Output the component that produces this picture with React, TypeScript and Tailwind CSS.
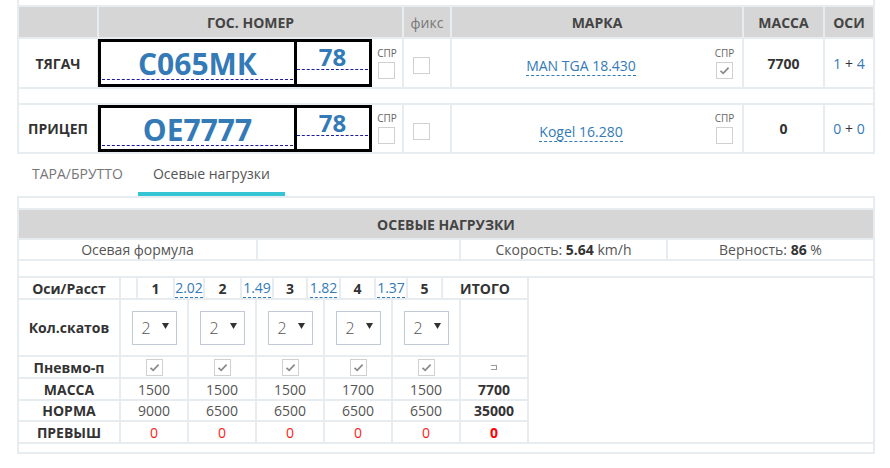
import React from "react";

const linkCls = "text-[#337ab7] border-b border-dashed border-[#337ab7]";

function CheckBox({ checked = false }: { checked?: boolean }) {
    return (
        <div className="w-[17px] h-[17px] border border-[#d0d0d0] bg-white flex items-center justify-center">
            {checked && (
                <svg width="11" height="9" viewBox="0 0 11 9">
                    <path d="M1.5 4.8 L4.2 7.4 L9.6 1.6" stroke="#8a8a8a" strokeWidth="1.7" fill="none" />
                </svg>
            )}
        </div>
    );
}

function Spr({ checked = false }: { checked?: boolean }) {
    return (
        <div className="flex flex-col items-center">
            <span className="text-[10px] leading-[10px] text-[#666]">СПР</span>
            <div className="mt-[4px]">
                <CheckBox checked={checked} />
            </div>
        </div>
    );
}

function Plate({ number, region }: { number: string; region: string }) {
    return (
        <div className="w-[274px] -ml-[1px] border-[3px] border-black flex self-stretch">
            <div className="w-[193px] px-[1px] pt-[5px]">
                <div className="h-[33px] leading-[33px] text-[30px] font-bold text-[#337ab7] text-center border-b border-dashed border-[#1a1a9c]">
                    {number}
                </div>
            </div>
            <div className="w-[3px] bg-black" />
            <div className="w-[72px] pr-[1px] pt-[3px]">
                <div className="h-[25px] leading-[24px] text-[24px] font-bold text-[#337ab7] text-center border-b border-dashed border-[#1a1a9c]">
                    {region}
                </div>
            </div>
        </div>
    );
}

function VehicleRow(props: { label: string; number: string; model: string; modelChecked: boolean; mass: string; axles: [string, string]; h: string }) {
    const { label, number, model, modelChecked, mass, axles, h } = props;
    return (
        <>
            <div className={`${h} bg-white flex items-center justify-center text-[14px] font-bold text-[#333]`}>{label}</div>
            <div className={`${h} bg-white flex`}>
                <Plate number={number} region="78" />
                <div className="w-[30px] flex items-center justify-center">
                    <Spr />
                </div>
            </div>
            <div className={`${h} bg-white pl-[9px] pt-[18px]`}>
                <CheckBox />
            </div>
            <div className={`${h} bg-white flex`}>
                <div className="flex-1 flex justify-center pt-[18px]">
                    <span className={`${linkCls} text-[14px] leading-[18px] h-[19px]`}>{model}</span>
                </div>
                <div className="w-[32px] pr-[3px] flex items-center justify-center">
                    <Spr checked={modelChecked} />
                </div>
            </div>
            <div className={`${h} bg-white flex items-center justify-center text-[14px] font-bold text-[#333]`}>{mass}</div>
            <div className={`${h} bg-white flex items-center justify-center text-[14px] text-[#333]`}>
                <span className="text-[#337ab7]">{axles[0]}</span>&nbsp;+&nbsp;<span className="text-[#337ab7]">{axles[1]}</span>
            </div>
        </>
    );
}

function Select() {
    return (
        <div className="w-[45px] h-[34px] border border-[#c2cad8] flex items-center justify-between pl-[9px] pr-[7px]">
            <span className="text-[16px] font-light text-[#555]">2</span>
            <svg width="7" height="6" viewBox="0 0 7 6" className="-mt-[3px]">
                <path d="M0 0 H7 L3.5 6 Z" fill="#333" />
            </svg>
        </div>
    );
}

const axleHead: Array<{ w: string; text: string; kind: "bold" | "link" | "none" }> = [
    { w: "w-[15px]", text: "", kind: "none" },
    { w: "w-[35px]", text: "1", kind: "bold" },
    { w: "w-[28px]", text: "2.02", kind: "link" },
    { w: "w-[35px]", text: "2", kind: "bold" },
    { w: "w-[30px]", text: "1.49", kind: "link" },
    { w: "w-[32px]", text: "3", kind: "bold" },
    { w: "w-[31px]", text: "1.82", kind: "link" },
    { w: "w-[33px]", text: "4", kind: "bold" },
    { w: "w-[30px]", text: "1.37", kind: "link" },
    { w: "w-[33px]", text: "5", kind: "bold" },
    { w: "w-[84px]", text: "ИТОГО", kind: "bold" },
];

const masses = ["1500", "1500", "1500", "1700", "1500"];
const norms = ["9000", "6500", "6500", "6500", "6500"];

function AxleRow({ label, h, cells, total }: { label: string; h: string; cells: React.ReactNode[]; total: React.ReactNode }) {
    return (
        <div className="flex gap-[2px]">
            <div className={`w-[100px] ${h} bg-white flex items-center justify-center text-[14px] font-bold text-[#333]`}>{label}</div>
            {cells.map((c, i) => (
                <div key={i} className={`w-[66px] ${h} bg-white flex items-center justify-center text-[14px] text-[#555]`}>{c}</div>
            ))}
            <div className={`w-[66px] ${h} bg-white flex items-center justify-center text-[14px] font-bold text-[#333]`}>{total}</div>
        </div>
    );
}

export default function App() {
    return (
        <div className="w-[890px] h-[468px] bg-white font-['Open_Sans',sans-serif] text-[#333] overflow-hidden">
            <div className="ml-[17px] w-[858px]">
                {/* vehicles */}
                <div className="grid grid-cols-[78px_303px_46px_290px_79px_48px] gap-[2px] bg-[#e7ecf1] px-[2px] pb-[2px]">
                    <div className="col-span-6 h-[5px] bg-white" />
                    <div className="h-[30px] bg-[#d6d6d6]" />
                    <div className="h-[30px] bg-[#d6d6d6] flex items-center justify-center text-[14px] font-bold text-[#444]">ГОС. НОМЕР</div>
                    <div className="h-[30px] bg-[#d6d6d6] flex items-center justify-center text-[14px] text-[#777]">фикс</div>
                    <div className="h-[30px] bg-[#d6d6d6] flex items-center justify-center text-[14px] font-bold text-[#444]">МАРКА</div>
                    <div className="h-[30px] bg-[#d6d6d6] flex items-center justify-center text-[14px] font-bold text-[#444]">МАССА</div>
                    <div className="h-[30px] bg-[#d6d6d6] flex items-center justify-center text-[14px] font-bold text-[#444]">ОСИ</div>

                    <VehicleRow label="ТЯГАЧ" number="С065МК" model="MAN TGA 18.430" modelChecked mass="7700" axles={["1", "4"]} h="h-[48px]" />
                    <div className="col-span-6 h-[14px] bg-white" />
                    <VehicleRow label="ПРИЦЕП" number="ОЕ7777" model="Kogel 16.280" modelChecked={false} mass="0" axles={["0", "0"]} h="h-[47px]" />
                </div>

                {/* tabs */}
                <div className="flex">
                    <div className="h-[42px] px-[15px] flex items-center border-b-4 border-transparent text-[14px] text-[#777]">ТАРА/БРУТТО</div>
                    <div className="h-[42px] px-[15px] flex items-center border-b-4 border-[#36c6d3] text-[14px] text-[#555]">Осевые нагрузки</div>
                </div>

                {/* axle loads */}
                <div className="flex flex-col gap-[2px] bg-[#e7ecf1] p-[2px]">
                    <div className="h-[10px] bg-white" />
                    <div className="h-[28px] bg-[#d6d6d6] flex items-center justify-center text-[14px] font-bold text-[#444]">ОСЕВЫЕ НАГРУЗКИ</div>
                    <div className="grid grid-cols-[237px_201px_205px_205px] gap-[2px] text-[14px] text-[#555]">
                        <div className="h-[19px] bg-white flex items-center justify-center">Осевая формула</div>
                        <div className="h-[19px] bg-white" />
                        <div className="h-[19px] bg-white flex items-center justify-center">
                            Скорость:&nbsp;<b className="text-[#333]">5.64</b>&nbsp;km/h
                        </div>
                        <div className="h-[19px] bg-white flex items-center justify-center">
                            Верность:&nbsp;<b className="text-[#333]">86</b>&nbsp;%
                        </div>
                    </div>
                    <div className="h-[15px] bg-white" />
                    <div className="bg-white">
                        <div className="w-fit flex flex-col gap-[2px] bg-[#e7ecf1] pr-[2px]">
                            <div className="flex gap-[2px]">
                                <div className="w-[100px] h-[20px] bg-white flex items-center justify-center text-[14px] font-bold text-[#333]">Оси/Расст</div>
                                {axleHead.map((c, i) => (
                                    <div key={i} className={`${c.w} h-[20px] bg-white flex justify-center ${c.kind === "link" ? "items-end" : "items-center"}`}>
                                        {c.kind === "bold" && <span className="text-[14px] font-bold text-[#333]">{c.text}</span>}
                                        {c.kind === "link" && <span className={`${linkCls} text-[14px] leading-[18px]`}>{c.text}</span>}
                                    </div>
                                ))}
                            </div>
                            <AxleRow label="Кол.скатов" h="h-[55px]" cells={masses.map((_, i) => <Select key={i} />)} total="" />
                            <AxleRow
                                label="Пневмо-п"
                                h="h-[20px]"
                                cells={masses.map((_, i) => <CheckBox key={i} checked />)}
                                total={<span className="w-[6px] h-[5px] border border-l-0 border-[#999]" />}
                            />
                            <AxleRow label="МАССА" h="h-[20px]" cells={masses} total="7700" />
                            <AxleRow label="НОРМА" h="h-[19px]" cells={norms} total="35000" />
                            <AxleRow
                                label="ПРЕВЫШ"
                                h="h-[20px]"
                                cells={masses.map((_, i) => <span key={i} className="text-[#ff1a1a]">0</span>)}
                                total={<span className="text-[#ff0000]">0</span>}
                            />
                        </div>
                    </div>
                    <div className="h-[8px] bg-white" />
                </div>
            </div>
        </div>
    );
}
